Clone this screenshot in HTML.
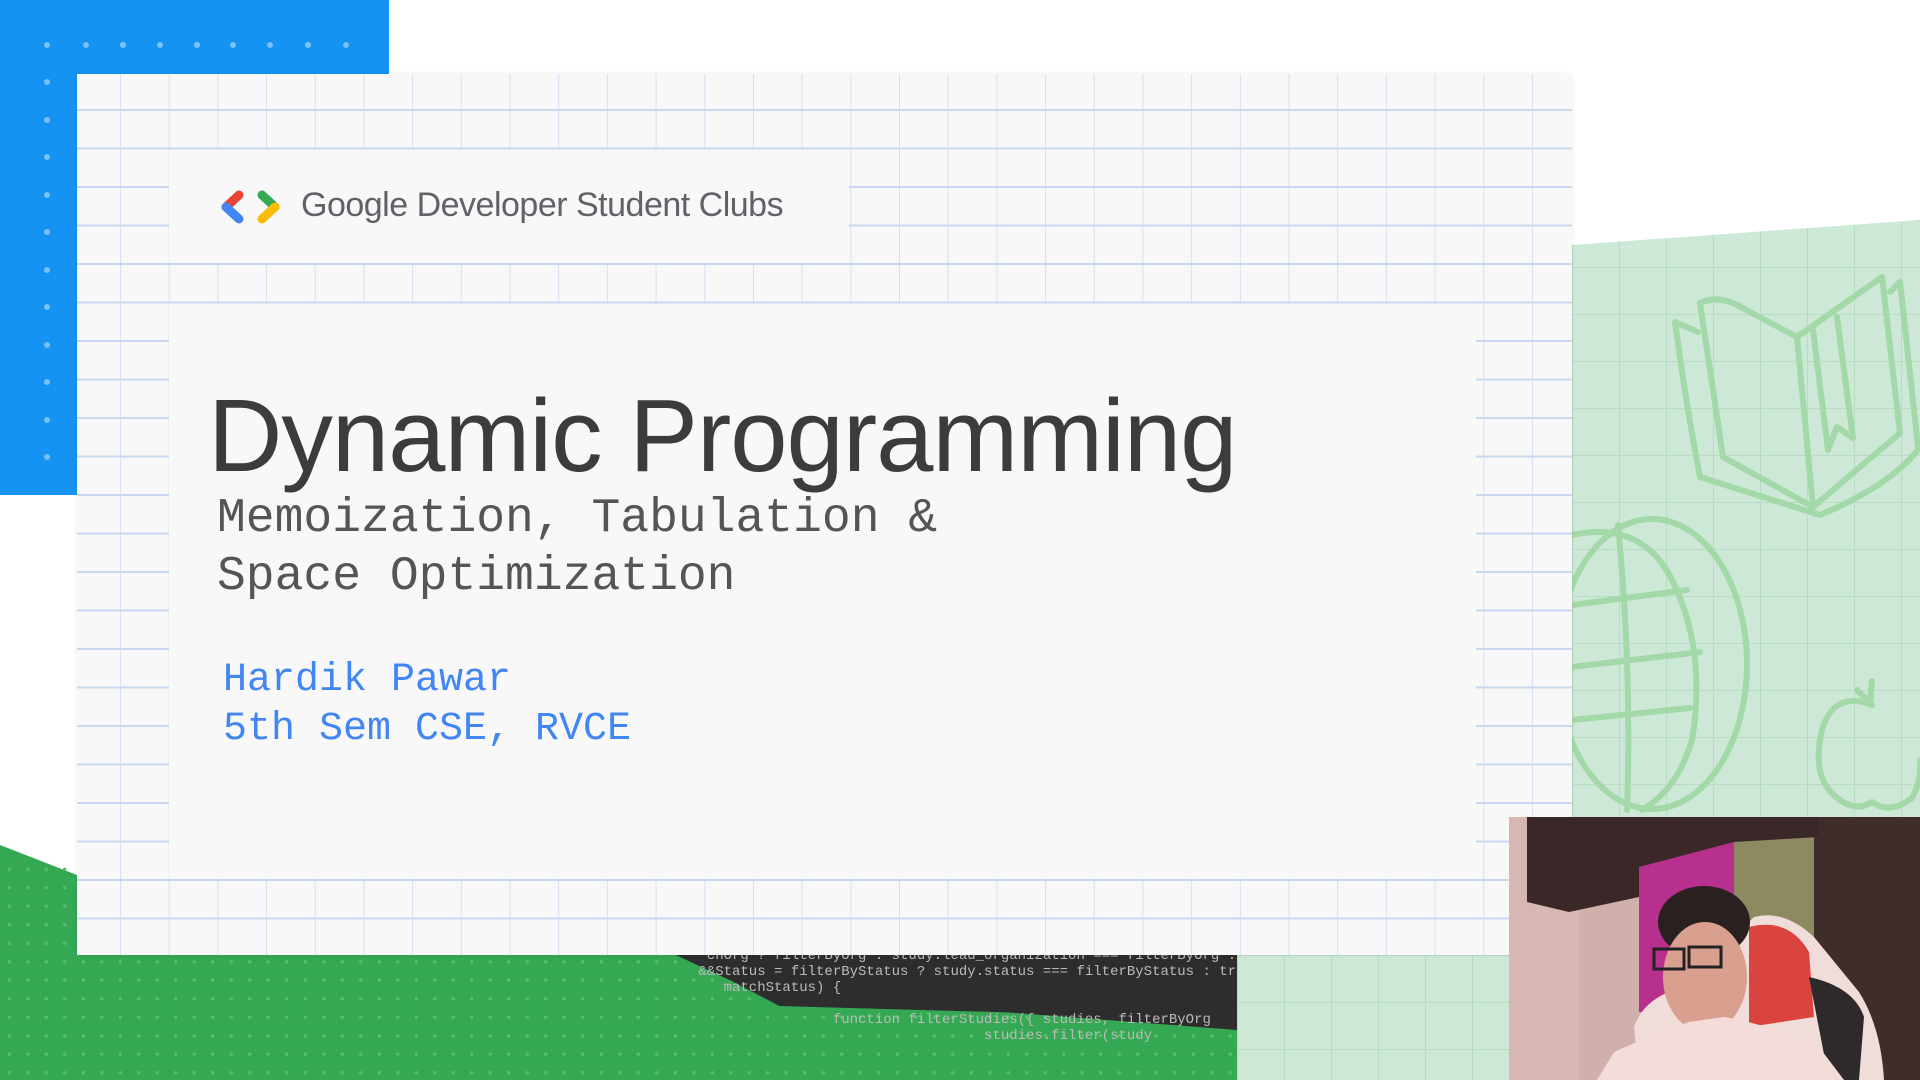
<!DOCTYPE html>
<html><head><meta charset="utf-8"><style>
*{margin:0;padding:0;box-sizing:border-box}
html,body{width:1920px;height:1080px;overflow:hidden}
body{background:#fff;position:relative;font-family:"Liberation Sans",sans-serif}
.abs{position:absolute}
.grid{background-color:#f8f8f9;background-image:linear-gradient(#c9d8f0 2px,transparent 2px),linear-gradient(90deg,#d4e0f3 1px,transparent 1px);background-size:48.7px 38.5px;background-position:0 35px,43px 0}
.ggrid{background-color:#cde8d6;background-image:linear-gradient(#b6dcc4 1px,transparent 1px),linear-gradient(90deg,#b6dcc4 1px,transparent 1px);background-size:47px 47px}
</style></head><body>
<!-- blue block -->
<div class="abs" style="left:0;top:0;width:389px;height:495px;background:#1493f2"></div>
<svg class="abs" style="left:0;top:0" width="389" height="495">
<g fill="#7cc0f6">
<circle cx="47" cy="45" r="3"/><circle cx="86" cy="45" r="3"/><circle cx="123" cy="45" r="3"/><circle cx="160" cy="45" r="3"/><circle cx="197" cy="45" r="3"/><circle cx="233" cy="45" r="3"/><circle cx="270" cy="45" r="3"/><circle cx="308" cy="45" r="3"/><circle cx="346" cy="45" r="3"/>
<circle cx="47" cy="82" r="3"/><circle cx="47" cy="120" r="3"/><circle cx="47" cy="157" r="3"/><circle cx="47" cy="195" r="3"/><circle cx="47" cy="232" r="3"/><circle cx="47" cy="270" r="3"/><circle cx="47" cy="307" r="3"/><circle cx="47" cy="345" r="3"/><circle cx="47" cy="382" r="3"/><circle cx="47" cy="420" r="3"/><circle cx="47" cy="457" r="3"/>
</g></svg>
<!-- right green -->
<div class="abs ggrid" style="left:1572px;top:220px;width:348px;height:600px;clip-path:polygon(0 25px,100% 0,100% 100%,0 100%)"></div>
<svg class="abs" style="left:1572px;top:220px" width="348" height="600" fill="none" stroke="#a3d8a8" stroke-width="6" stroke-linejoin="round" stroke-linecap="round">
<path d="M103 102 L126 112 M103 102 Q115 190 128 257 L248 295 Q320 265 348 227"/>
<path d="M128 83 Q145 75 165 85 L225 117 L310 57"/>
<path d="M128 83 L151 237 L241 287 L328 213 L310 57"/>
<path d="M225 117 L241 287"/>
<path d="M318 72 L328 62 L346 227"/>
<path d="M241 110 L256 230 L265 207 L281 218 L265 97"/>
<ellipse cx="80" cy="444" rx="95" ry="145"/>
<path d="M0 315 Q70 300 100 360 Q135 430 120 520 Q105 570 70 590"/>
<path d="M46 305 Q60 450 55 590"/>
<path d="M0 385 L115 370"/><path d="M0 447 L128 432"/><path d="M0 500 L118 488"/>
<path d="M300 461 L298 485 M285 470 L300 485 M300 485 Q262 470 250 510 Q238 560 268 580 Q285 592 300 582 Q318 595 340 578 Q350 560 348 540"/>
</svg>
<!-- bottom green -->
<div class="abs" style="left:0;top:845px;width:1240px;height:235px;background:#34a853;clip-path:polygon(0 0,77px 30px,100% 30px,100% 100%,0 100%)"></div>
<div class="abs" style="left:0;top:860px;width:1240px;height:220px;background-image:radial-gradient(#5cba76 1.5px,transparent 2px);background-size:18.5px 18.5px"></div>
<div class="abs" style="left:665px;top:950px;width:572px;height:80px;background:#2d2d2d;clip-path:polygon(0 0,100% 0,100% 100%,60% 78%,20% 70%,12% 40%)"></div>
<div class="abs" style="left:690px;top:948px;font-family:'Liberation Mono',monospace;font-size:14px;color:#bbb;line-height:16px;white-space:pre;width:545px;overflow:hidden">  cnOrg ? filterByOrg : study.lead_organization === filterByOrg : t
 &amp;&amp;Status = filterByStatus ? study.status === filterByStatus : true
    matchStatus) {

                 function filterStudies({ studies, filterByOrg
                                   studies.filter(study</div>
<div class="abs ggrid" style="left:1237px;top:955px;width:272px;height:125px"></div>
<!-- slide -->
<div class="abs grid" style="left:77px;top:74px;width:1495px;height:881px;box-shadow:0 0 4px rgba(0,0,0,.08)"></div>
<div class="abs" style="left:169px;top:150px;width:680px;height:113px;background:#f8f8f9"></div>
<div class="abs" style="left:169px;top:304px;width:1307px;height:574px;background:#f8f8f9"></div>
<!-- logo -->
<svg class="abs" style="left:219px;top:189px" width="70" height="36" stroke-linecap="round" stroke-width="9">
<line x1="20" y1="6" x2="7" y2="18" stroke="#ea4335"/><line x1="7" y1="18" x2="20" y2="30" stroke="#4285f4"/>
<line x1="43" y1="6" x2="56" y2="18" stroke="#34a853"/><line x1="56" y1="18" x2="43" y2="30" stroke="#fbbc04"/>
</svg>
<div class="abs" style="left:301px;top:186px;font-size:34px;color:#5f6368;letter-spacing:-0.5px">Google Developer Student Clubs</div>
<!-- title -->
<div class="abs" style="left:208px;top:376px;font-size:103px;color:#3c3c3c;letter-spacing:-1px;line-height:120px">Dynamic Programming</div>
<div class="abs" style="left:217px;top:490px;font-family:'Liberation Mono',monospace;font-size:48px;color:#555;line-height:58px;white-space:pre">Memoization, Tabulation &amp;
Space Optimization</div>
<div class="abs" style="left:223px;top:656px;font-family:'Liberation Mono',monospace;font-size:40px;color:#4285f4;line-height:49px;white-space:pre">Hardik Pawar
5th Sem CSE, RVCE</div>
<!-- webcam -->
<svg class="abs" style="left:1509px;top:817px" width="411" height="263">
<rect width="411" height="263" fill="#d7b6b3"/>
<rect x="70" y="80" width="70" height="183" fill="#cfb0ab"/>
<rect x="130" y="20" width="100" height="175" fill="#b8308e"/>
<rect x="225" y="10" width="95" height="150" fill="#8d8a62"/>
<rect x="305" y="0" width="106" height="263" fill="#3f2d2c"/>
<polygon points="18,0 310,0 310,20 225,25 130,50 130,80 60,95 18,85" fill="#3a2828"/>
<path d="M130 263 L125 210 Q135 180 175 170 L245 100 Q275 92 305 120 L350 175 Q372 210 375 263 Z" fill="#f0dcd8"/>
<path d="M240 110 Q280 100 300 135 L305 200 L240 210 Z" fill="#d9443f"/>
<path d="M300 160 Q345 170 355 200 L350 263 L320 263 Z" fill="#2e2a2c"/>
<ellipse cx="195" cy="105" rx="46" ry="36" fill="#2a2020"/>
<ellipse cx="196" cy="160" rx="42" ry="55" fill="#d9a08f"/>
<path d="M88 263 L105 235 Q150 215 180 205 L215 200 Q270 210 310 230 L335 263 Z" fill="#f3dcd9"/>
<rect x="145" y="132" width="30" height="20" fill="none" stroke="#222" stroke-width="3"/>
<rect x="180" y="130" width="32" height="20" fill="none" stroke="#222" stroke-width="3"/>
</svg>
</body></html>
